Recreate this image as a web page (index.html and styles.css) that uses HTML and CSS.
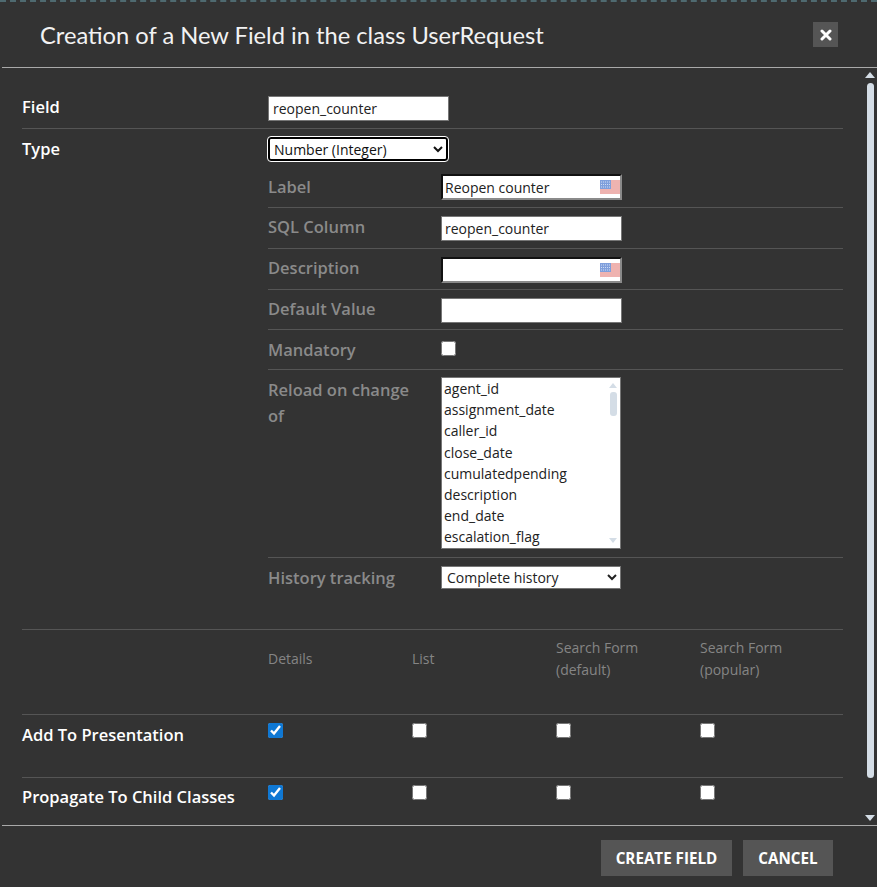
FILE: index.html
```html
<!DOCTYPE html>
<html lang="en">

<head>
  <meta charset="UTF-8" />
  <title>Creation of a New Field</title>
  <link rel="stylesheet" href="styles.css">
</head>

<body>

<div class="modal">
  <div class="modal-head">
    <h1>Creation of a New Field in the class UserRequest</h1>
    <button type="button" class="close-btn" aria-label="Close">
      <svg width="12" height="12" viewBox="0 0 12 12"><path d="M2 2l8 8M10 2l-8 8" stroke="#fff" stroke-width="3" stroke-linecap="round"/></svg>
    </button>
  </div>

  <div class="modal-body">
    <form class="form">
      <!-- Field -->
      <div class="row row-field">
        <label class="main-label" for="field">Field</label>
        <input class="text-input wide" type="text" id="field" value="reopen_counter" />
      </div>

      <!-- Type + its properties -->
      <div class="row row-type">
        <label class="main-label" for="type">Type</label>
        <div class="type-col">
          <select class="type-select" id="type">
            <option>Number (Integer)</option>
          </select>

          <div class="sub-row sub-first">
            <label for="lbl">Label</label>
            <div class="flag-input">
              <input class="text-input inset" type="text" id="lbl" value="Reopen counter" />
              <svg class="flag" viewBox="0 0 20 14"><use href="#us-flag"/></svg>
            </div>
          </div>
          <div class="sub-row">
            <label for="sql">SQL Column</label>
            <input class="text-input narrow" type="text" id="sql" value="reopen_counter" />
          </div>
          <div class="sub-row">
            <label for="desc">Description</label>
            <div class="flag-input">
              <input class="text-input inset" type="text" id="desc" />
              <svg class="flag" viewBox="0 0 20 14"><use href="#us-flag"/></svg>
            </div>
          </div>
          <div class="sub-row sub-default">
            <label for="def">Default Value</label>
            <input class="text-input narrow" type="text" id="def" />
          </div>
          <div class="sub-row sub-mandatory">
            <label for="mand">Mandatory</label>
            <input class="check" type="checkbox" id="mand" />
          </div>
          <div class="sub-row sub-reload">
            <label>Reload on change of</label>
            <div class="listbox">
              <ul>
                <li>agent_id</li>
                <li>assignment_date</li>
                <li>caller_id</li>
                <li>close_date</li>
                <li>cumulatedpending</li>
                <li>description</li>
                <li>end_date</li>
                <li>escalation_flag</li>
              </ul>
              <div class="list-scroll">
                <span class="arrow-up"></span>
                <span class="list-thumb"></span>
                <span class="arrow-down"></span>
              </div>
            </div>
          </div>
          <div class="sub-row sub-history">
            <label for="hist">History tracking</label>
            <select class="hist-select" id="hist">
              <option>Complete history</option>
            </select>
          </div>
        </div>
      </div>

      <!-- Presentation -->
      <div class="row row-heads">
        <span></span>
        <span class="col-head">Details</span>
        <span class="col-head">List</span>
        <span class="col-head">Search Form<br>(default)</span>
        <span class="col-head">Search Form<br>(popular)</span>
      </div>
      <div class="row row-checks row-present">
        <span class="main-label">Add To Presentation</span>
        <span><input class="check" type="checkbox" checked /></span>
        <span><input class="check" type="checkbox" /></span>
        <span><input class="check" type="checkbox" /></span>
        <span><input class="check" type="checkbox" /></span>
      </div>
      <div class="row row-checks row-propagate">
        <span class="main-label">Propagate To Child Classes</span>
        <span><input class="check" type="checkbox" checked /></span>
        <span><input class="check" type="checkbox" /></span>
        <span><input class="check" type="checkbox" /></span>
        <span><input class="check" type="checkbox" /></span>
      </div>
    </form>

    <div class="scrollbar">
      <span class="bar-up"></span>
      <span class="bar-thumb"></span>
      <span class="bar-down"></span>
    </div>
  </div>

  <div class="modal-foot">
    <button type="button" class="btn btn-create">CREATE FIELD</button>
    <button type="button" class="btn btn-cancel">CANCEL</button>
  </div>
</div>

<svg class="defs" width="0" height="0">
  <symbol id="us-flag" viewBox="0 0 20 14">
    <rect width="20" height="14" fill="#f4d6d4"/>
    <path d="M0 1h20M0 3h20M0 5h20M0 7h20M0 9h20M0 11h20M0 13h20" stroke="#e9908c" stroke-width="1"/>
    <rect width="11" height="9" fill="#7f9fdc"/>
    <path d="M1 2h9M1 4.5h9M1 7h9" stroke="#cfdcf4" stroke-width="1" stroke-dasharray="1 1"/>
  </symbol>
</svg>

</body>
</html>
```

FILE: styles.css
```css
* {
  box-sizing: border-box;
}
html,
body {
  margin: 0;
  height: 887px;
  overflow: hidden;
}
body {
  font-family: "Open Sans", "Noto Sans", sans-serif;
  background-color: #333333;
  color: #ffffff;
}
.modal {
  height: 887px;
  display: flex;
  flex-direction: column;
  border-top: 2px dashed #4f6a70;
  background-color: #333333;
}
.modal-head {
  height: 66px;
  flex: none;
  display: flex;
  align-items: center;
  justify-content: space-between;
  padding: 0 39px 0 38px;
  margin-left: 2px;
  border-bottom: 1px solid #a9a9a9;
}
.modal-head h1 {
  margin: 0;
  font-family: "Lato", sans-serif;
  font-size: 23.7px;
  font-weight: 400;
  color: #f2f2f2;
}
.close-btn {
  width: 25px;
  height: 25px;
  padding: 0;
  border: none;
  background-color: #555555;
  display: flex;
  align-items: center;
  justify-content: center;
}

/* Corps du formulaire */
.modal-body {
  height: 758px;
  flex: none;
  display: flex;
  overflow: hidden;
  margin-left: 2px;
  border-bottom: 1px solid #a9a9a9;
}
.form {
  width: 841px;
  flex: none;
  padding: 0 0 0 20px;
}
.row {
  display: grid;
  grid-template-columns: 246px 1fr;
  border-bottom: 1px solid #555555;
}
.main-label {
  font-size: 16.5px;
  font-weight: 600;
  line-height: 22px;
  color: #ffffff;
}
.row-field {
  height: 61px;
  padding-top: 28px;
}
.row-type {
  height: 501px;
  padding-top: 8px;
}
.row-type .main-label {
  margin-top: 1px;
}
.text-input {
  height: 25px;
  padding: 1px 3px;
  border: 1px solid #767676;
  background-color: #ffffff;
  color: #222222;
  font-family: inherit;
  font-size: 14px;
  outline: none;
}
.wide {
  width: 181px;
  padding-left: 4px;
}
.narrow {
  width: 181px;
}
.type-col {
  display: flex;
  flex-direction: column;
}
.type-select {
  width: 180px;
  height: 24px;
  padding: 0;
  border: 2px solid #000000;
  border-radius: 3px;
  outline: 1px solid #ffffff;
  background-color: #ffffff;
  color: #111111;
  font-family: inherit;
  font-size: 14px;
}
.sub-row {
  display: grid;
  grid-template-columns: 173px 1fr;
  height: 41px;
  padding-top: 8px;
  border-bottom: 1px solid #555555;
}
.sub-row:last-child {
  border-bottom: none;
}
.sub-row label {
  padding-right: 20px;
  font-size: 16.5px;
  font-weight: 600;
  line-height: 22px;
  color: #8a8a8a;
}
.sub-first {
  height: 47px;
  padding-top: 13px;
}
.sub-first label {
  line-height: 26px;
}
.sub-default {
  height: 40px;
}
.sub-mandatory {
  height: 40px;
  padding-top: 9px;
}
.sub-mandatory .check {
  margin-top: 2px;
}
.sub-reload {
  height: 188px;
  padding-top: 7px;
}
.sub-reload label {
  line-height: 26px;
}
.sub-history {
  height: 72px;
  padding-top: 8px;
}
.sub-history label {
  line-height: 24px;
}
.flag-input {
  position: relative;
  width: 181px;
  height: 26px;
}
.inset {
  width: 100%;
  height: 100%;
  border: 2px solid #8a8a8a;
  border-top-color: #111111;
  border-left-color: #111111;
  padding: 0 2px;
}
.flag {
  position: absolute;
  right: 2px;
  top: 6px;
  width: 20px;
  height: 14px;
}
.defs {
  position: absolute;
}
.check {
  width: 15px;
  height: 15px;
  margin: 3px 0 0 0;
  accent-color: #0f78d4;
}

/* Liste Reload on change of */
.listbox {
  width: 180px;
  height: 172px;
  display: flex;
  justify-content: space-between;
  border: 1px solid #767676;
  background-color: #ffffff;
}
.listbox ul {
  margin: 0;
  padding: 0 0 0 2px;
  list-style: none;
  font-size: 14px;
  line-height: 21.2px;
  color: #222222;
}
.list-scroll {
  width: 8px;
  margin: 5px 3px 5px 0;
  display: flex;
  flex-direction: column;
  align-items: center;
}
.arrow-up {
  border: 4px solid transparent;
  border-top: 0;
  border-bottom: 5px solid #d4dde6;
}
.arrow-down {
  margin-top: auto;
  border: 4px solid transparent;
  border-bottom: 0;
  border-top: 5px solid #d4dde6;
}
.list-thumb {
  width: 7px;
  height: 24px;
  margin-top: 4px;
  border-radius: 3px;
  background-color: #d4dde6;
}
.hist-select {
  width: 180px;
  height: 23px;
  padding: 0 0 0 1px;
  border: 1px solid #767676;
  background-color: #ffffff;
  color: #222222;
  font-family: inherit;
  font-size: 14px;
}

/* Tableau de presentation */
.row-heads,
.row-checks {
  grid-template-columns: 246px 144px 144px 144px 1fr;
}
.row-heads {
  height: 85px;
  padding-top: 7px;
}
.col-head {
  font-size: 14px;
  line-height: 22px;
  color: #858585;
}
.col-head:nth-child(2),
.col-head:nth-child(3) {
  padding-top: 11px;
}
.row-present {
  height: 63px;
  padding-top: 5px;
}
.row-present .main-label {
  margin-top: 4px;
}
.row-propagate {
  height: 48px;
  padding-top: 4px;
  border-bottom: none;
}
.row-propagate .main-label {
  margin-top: 4px;
}

/* Barre de defilement */
.scrollbar {
  width: 12px;
  margin-left: 21px;
  padding: 4px 0 4px;
  display: flex;
  flex-direction: column;
  align-items: center;
}
.bar-up {
  border: 5px solid transparent;
  border-top: 0;
  border-bottom: 6px solid #d4dde6;
}
.bar-thumb {
  width: 7px;
  height: 695px;
  margin-top: 5px;
  border-radius: 4px;
  background-color: #d4dde6;
}
.bar-down {
  margin-top: auto;
  border: 5px solid transparent;
  border-bottom: 0;
  border-top: 6px solid #d4dde6;
}

/* Pied de page */
.modal-foot {
  flex: 1;
  display: flex;
  justify-content: flex-end;
  gap: 11px;
  padding: 14px 44px 0 0;
}
.btn {
  height: 36px;
  padding: 0;
  border: none;
  background-color: #555555;
  color: #ffffff;
  font-family: inherit;
  font-size: 15.2px;
  font-weight: 700;
  cursor: pointer;
}
.btn-create {
  width: 131px;
}
.btn-cancel {
  width: 90px;
}
```
